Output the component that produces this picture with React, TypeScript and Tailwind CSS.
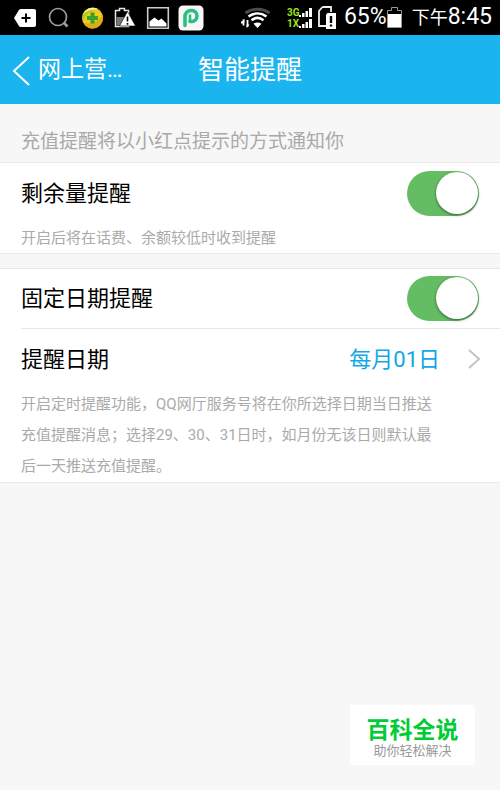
import { useState } from "react";

function StatusIcons() {
  return (
    <div className="flex items-center">
      <svg className="ml-3.5 shrink-0" width="22" height="20" viewBox="0 0 22 20">
        <path d="M7 1h13a2 2 0 0 1 2 2v14a2 2 0 0 1-2 2H7c-1 0-1.700-.4-2.200-1.200L0 10l4.800-7.800C5.300 1.400 6 1 7 1Z" fill="#fff" />
        <path d="M12 5.500v9M7.500 10h9" stroke="#000" strokeWidth="2" />
      </svg>
      <svg className="ml-3 shrink-0" width="22" height="22" viewBox="0 0 22 22" fill="none" stroke="#9c9c9c">
        <circle cx="10" cy="10" r="8.500" strokeWidth="1.700" />
        <path d="m15.500 15.500 4 4" strokeWidth="2.600" />
      </svg>
      <svg className="ml-3 shrink-0" width="22" height="22" viewBox="0 0 22 22">
        <circle cx="10.500" cy="11" r="10.500" fill="#f2c91f" />
        <path d="M1 8C3 2 10-1 16 2c-5 0-10 2-15 6Z" fill="#fff38a" />
        <path d="M0 10C2 5 8 2 13 3 8 4 3 8 1 14Z" fill="#a9c92a" />
        <path d="M2 16c7 2 13-1 19-8 1 8-4 13.500-10.500 13.500-4 0-7-2.500-8.500-5.500Z" fill="#eba414" />
        <path d="M20 12c-3 4-7 6-12 6" stroke="#b8bd1b" strokeWidth="1.500" fill="none" />
        <path d="M8.500 5.500h4V9H16v4h-3.500v3.500h-4V13H5V9h3.500Z" fill="#39a22e" />
      </svg>
      <svg className="ml-2.5 shrink-0" width="22" height="22" viewBox="0 0 22 22">
        <path d="M1.500 3.500h4v-2h5v2h4v16h-13Z" stroke="#e5e5e5" strokeWidth="1.500" fill="#000" />
        <path d="M2.500 10h11v8.500h-11Z" fill="#777" />
        <path d="M13.500 4.500 21.500 19h-16Z" fill="#fff" stroke="#000" strokeWidth=".6" />
        <path d="M13.500 9.500v5M13.500 16v1.700" stroke="#000" strokeWidth="1.600" />
      </svg>
      <svg className="ml-2.5 shrink-0" width="24" height="24" viewBox="0 0 24 24">
        <path d="M1.700 1.700h20.600v20.600H1.700Z" fill="#000" stroke="#ccc" strokeWidth="1.600" />
        <path d="M3.500 20.500v-5l5-4 4 3 3-2 5 5v3Z" fill="#fff" />
      </svg>
      <svg className="ml-2 shrink-0" width="26" height="26" viewBox="0 0 26 26">
        <rect x=".5" y=".5" width="25" height="25" rx="4.500" fill="#f7f7f7" />
        <path d="M7 20.500V11.500a6 6 0 0 1 6-6h.5a5.500 5.500 0 0 1 0 11H12" fill="none" stroke="#2bbf82" strokeWidth="3.600" strokeLinecap="round" />
        <path d="M12 10.500v6" stroke="#2bbf82" strokeWidth="2.600" strokeLinecap="round" />
      </svg>
    </div>
  );
}

function SignalBars() {
  return (
    <svg className="shrink-0" width="13" height="9" viewBox="0 0 13 9" fill="#fff">
      <path d="M0 7h2v2H0ZM3 5h2.500v4H3ZM6.500 3H9v6H6.500ZM10 0h3v9h-3Z" />
    </svg>
  );
}

function StatusBar() {
  return (
    <div className="flex h-[35px] items-center justify-between bg-black pr-2 text-white">
      <StatusIcons />
      <div className="flex items-center">
        <svg className="mr-4 shrink-0" width="30" height="22" viewBox="0 0 30 22">
          <path d="M2.500 12.500v6M0 15.500h2.500M6.500 13v7" stroke="#fff" strokeWidth="1.800" fill="none" />
          <path d="M.5 15.500 3.400 12v3.500ZM8.500 17.500 5.600 21v-3.500Z" fill="#fff" />
          <path d="M4.500 6c7-5 17-5 24 0" stroke="#4c4c4c" strokeWidth="3" fill="none" />
          <path d="M7.500 9.500c5.500-4 12.500-4 18 0M10.500 13.200c3.700-2.800 8.300-2.800 12 0" stroke="#fff" strokeWidth="2.600" fill="none" />
          <path d="M12.500 16.800c2.400-1.800 5.600-1.800 8 0L16.500 21Z" fill="#fff" />
        </svg>
        <div className="mr-1.5 font-bold text-[10px] leading-[11px] text-[#9be21c]">
          <div className="flex items-center">
            <span className="w-3">3G</span>
            <SignalBars />
          </div>
          <div className="flex items-center">
            <span className="w-3">1X</span>
            <SignalBars />
          </div>
        </div>
        <svg className="mr-2 shrink-0" width="18" height="23" viewBox="0 0 18 23">
          <path d="M4.500 1H13v5M8 20H1V5l3.500-4" stroke="#eee" strokeWidth="1.800" fill="none" />
          <path d="M9.500 7H18v16H8V8.500Z" fill="#fff" />
          <path d="M13 10v7M13 18.500v2" stroke="#000" strokeWidth="2.400" />
        </svg>
        <span className="text-[23px]">65%</span>
        <svg className="mr-2.5 shrink-0" width="15" height="21" viewBox="0 0 15 21">
          <path d="M.5 20.500v-17h4v-3h6v3h4v17Z" stroke="#999" fill="#000" />
          <path d="M1 7h13v13H1Z" fill="#fff" />
        </svg>
        <span className="whitespace-nowrap text-lg">下午</span>
        <span className="text-[23px]">8:45</span>
      </div>
    </div>
  );
}

function Toggle({ id }: { id: string }) {
  const [on, setOn] = useState(true);

  return (
    <span className="relative block h-[45px] w-[72px] shrink-0">
      <input
        id={id}
        type="checkbox"
        role="switch"
        checked={on}
        onChange={() => setOn(!on)}
        className="peer block h-full w-full cursor-pointer appearance-none rounded-full bg-gray-300 checked:bg-[#64bd63]"
      />
      <span className="pointer-events-none absolute top-px left-px size-[42px] rounded-full bg-white shadow-[0_1px_3px_rgba(0,0,0,0.5)] transition-transform peer-checked:translate-x-7" />
    </span>
  );
}

export default function App() {
  return (
    <div className="flex min-h-screen flex-col bg-[#f7f7f7] font-['Roboto','Noto_Sans_CJK_SC',sans-serif] text-black">
      <StatusBar />

      <header className="grid h-[69px] grid-cols-[1fr_auto_1fr] items-center bg-[#1ab4ee] px-3 pt-0.5 text-white">
        <button className="flex items-center gap-2 text-[23px]">
          <svg width="18" height="30" viewBox="0 0 18 30" fill="none" stroke="#fff" strokeWidth="2">
            <path d="M17 1 2 15l15 14" />
          </svg>
          网上营…
        </button>
        <h1 className="text-[26px]">智能提醒</h1>
      </header>

      <main>
        <p className="px-[21px] pt-6 pb-1.5 text-[19px] leading-7 text-[#a9a9a9]">
          充值提醒将以小红点提示的方式通知你
        </p>

        <section className="border-y border-[#e8e8e8] bg-white px-[21px]">
          <div className="flex h-[60px] items-center justify-between">
            <label htmlFor="balance" className="text-[22px]">剩余量提醒</label>
            <Toggle id="balance" />
          </div>
          <p className="text-[15px] leading-[30px] text-[#aaa]">开启后将在话费、余额较低时收到提醒</p>
        </section>

        <section className="mt-3.5 border-y border-[#e8e8e8] bg-white pl-[21px]">
          <div className="flex h-[60px] items-center justify-between border-b border-[#e8e8e8] pr-[21px]">
            <label htmlFor="fixed-date" className="text-[22px]">固定日期提醒</label>
            <Toggle id="fixed-date" />
          </div>
          <button className="flex h-[60px] w-full items-center pr-5 text-[22px]">
            <span>提醒日期</span>
            <span className="ml-auto text-[#12a8e6]">每月01日</span>
            <svg className="ml-7" width="12" height="20" viewBox="0 0 12 20" fill="none" stroke="#c4c4c4" strokeWidth="2">
              <path d="m1 1 10 9-10 9" />
            </svg>
          </button>
          <p className="pr-[54px] text-[15px] leading-[31px] text-[#aaa]">
            开启定时提醒功能，QQ网厅服务号将在你所选择日期当日推送充值提醒消息；选择29、30、31日时，如月份无该日则默认最后一天推送充值提醒。
          </p>
        </section>
      </main>

      <aside className="mt-auto mr-[25px] mb-[25px] flex h-[60px] w-[125px] flex-col items-center justify-end self-end bg-white pb-1.5">
        <strong className="text-[23px] leading-6 font-bold text-[#00cc33]">百科全说</strong>
        <span className="text-[13px] leading-4 text-[#999]">助你轻松解决</span>
      </aside>
    </div>
  );
}
